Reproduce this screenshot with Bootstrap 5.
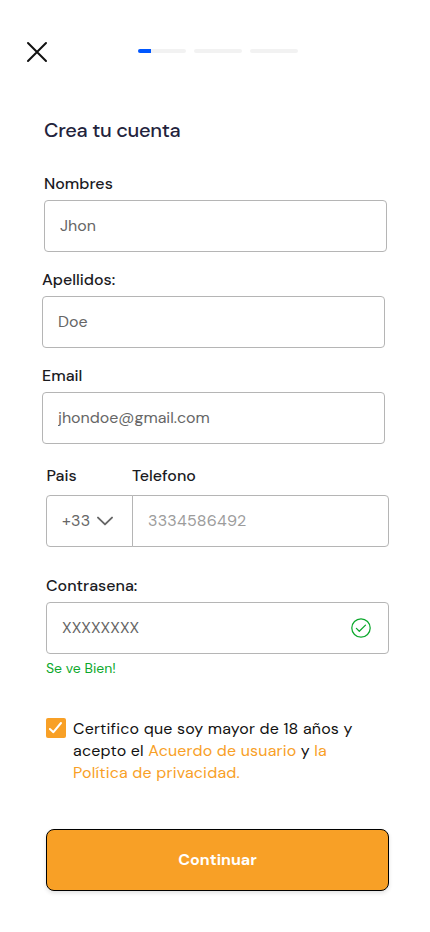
<!DOCTYPE html>
<html lang="es">
<head>
<meta charset="utf-8">
<meta name="viewport" content="width=device-width, initial-scale=1">
<title>Crea tu cuenta</title>
<link href="https://cdn.jsdelivr.net/npm/bootstrap@5.3.0/dist/css/bootstrap.min.css" rel="stylesheet">
<style>
  body { font-family: "DM Sans", Inter, "Liberation Sans", sans-serif; font-size: 16px; color: #1b1b1f; background: #fff; }
  .screen { width: 430px; height: 932px; overflow: hidden; }
  .topbar { padding: 41px 0 0 26px; height: 62px; }
  .close-btn { width: 22px; height: 22px; line-height: 0; }
  .steps { margin: 8px 0 0 90px; gap: 8px; }
  .step { width: 48px; height: 4px; border-radius: 2px; background: #f2f2f2; }
  .step .progress-bar { background: #0057ff; }
  .title { margin: 55px 0 0 44px; font-size: 20px; line-height: 26px; font-weight: 500; color: #23233c; letter-spacing: -.3px; }
  .field { width: 343px; margin-left: 46px; }
  .at-44 { margin: 31px 0 0 44px; }
  .at-42 { margin: 18px 0 0 42px; }
  .phone { margin-top: 22px; }
  .secret { margin-top: 29px; }
  .field .form-label { display: block; line-height: 20px; font-weight: 500; margin-bottom: 6px; }
  .field .form-control, .prefix { height: 52px; border: 1px solid #b5b5b5; border-radius: 4px; padding: 0 15px; font-size: 16px; color: #666; background: #fff; }
  .field .form-control { padding-bottom: 2px; }
  .prefix { width: 87px; letter-spacing: .3px; }
  .phone .form-control { letter-spacing: .2px; }
  .phone .form-control::placeholder { color: #9c9c9c; opacity: 1; }
  .phone-labels { height: 29px; }
  .phone-labels .form-label:first-child { width: 86px; padding-left: .5px; }
  .secret .form-control { padding-right: 50px; }
  .valid-icon { right: 18px; top: 16px; line-height: 0; z-index: 2; }
  .hint { font-size: 14px; line-height: 20px; margin-top: 4px; color: #0ca82c; }
  .consent { margin: 40px 0 0 46px; gap: 7px; line-height: 22px; letter-spacing: .19px; color: #111; }
  .consent a { color: #f8a026; }
  .tick { width: 20px; height: 20px; border-radius: 2px; background: #f8a026; line-height: 0; }
  .submit { width: 343px; height: 62px; margin: 45px 0 0 46px; border: 1px solid #000; border-radius: 8px; font-size: 16px; font-weight: 700; color: #fff; background: #f8a026; box-shadow: 0 2px 4px rgba(0,0,0,.12); }
  .submit:hover { color: #fff; background: #f0951a; }
</style>
</head>
<body>
<main class="screen">
  <header class="topbar d-flex align-items-start">
    <button type="button" class="close-btn btn p-0 border-0" aria-label="Cerrar">
      <svg width="22" height="22" viewBox="0 0 22 22" fill="none" stroke="#111" stroke-width="2" stroke-linecap="round"><path d="M2 2 20 20M20 2 2 20"/></svg>
    </button>
    <div class="steps d-flex">
      <div class="step progress"><div class="progress-bar" style="width:27%"></div></div>
      <div class="step progress"></div>
      <div class="step progress"></div>
    </div>
  </header>

  <h1 class="title">Crea tu cuenta</h1>

  <form>
    <div class="field at-44">
      <label class="form-label" for="nombres">Nombres</label>
      <input id="nombres" class="form-control shadow-none" type="text" value="Jhon">
    </div>
    <div class="field at-42">
      <label class="form-label" for="apellidos">Apellidos:</label>
      <input id="apellidos" class="form-control shadow-none" type="text" value="Doe">
    </div>
    <div class="field at-42">
      <label class="form-label" for="email">Email</label>
      <input id="email" class="form-control shadow-none" type="email" value="jhondoe@gmail.com">
    </div>

    <div class="field phone">
      <div class="phone-labels d-flex">
        <label class="form-label" for="pais">Pais</label>
        <label class="form-label" for="telefono">Telefono</label>
      </div>
      <div class="input-group flex-nowrap">
        <button id="pais" type="button" class="prefix d-flex align-items-center flex-shrink-0">
          <span>+33</span>
          <svg class="ms-1" width="18" height="12" viewBox="0 0 18 12" fill="none" stroke="#666" stroke-width="1.9" stroke-linecap="round" stroke-linejoin="round"><path d="M3 2.6 10 9.4 17 2.6"/></svg>
        </button>
        <input id="telefono" class="form-control shadow-none" type="tel" placeholder="3334586492">
      </div>
    </div>

    <div class="field secret">
      <label class="form-label" for="clave">Contrasena:</label>
      <div class="position-relative">
        <input id="clave" class="form-control shadow-none" type="text" value="XXXXXXXX">
        <span class="valid-icon position-absolute">
          <svg width="20" height="20" viewBox="0 0 20 20" fill="none" stroke="#0ca82c" stroke-width="1.25" stroke-linecap="round" stroke-linejoin="round"><circle cx="10" cy="10" r="9.2"/><path d="M5.4 10.4 8.3 13.3 14.5 7.1"/></svg>
        </span>
      </div>
      <div class="hint">Se ve Bien!</div>
    </div>

    <div class="consent d-flex align-items-start">
      <span class="tick flex-shrink-0" role="checkbox" aria-checked="true" aria-label="Certifico">
        <svg width="20" height="20" viewBox="0 0 20 20" fill="none" stroke="#fff" stroke-width="2" stroke-linecap="round" stroke-linejoin="round"><path d="M3.9 11 7.4 14.2 15 5"/></svg>
      </span>
      <div class="text-nowrap">Certifico que soy mayor de 18 años y<br>acepto el <a class="text-decoration-none" href="#">Acuerdo de usuario</a> y <a class="text-decoration-none" href="#">la<br>Política de privacidad.</a></div>
    </div>

    <button type="button" class="submit btn p-0 d-block">Continuar</button>
  </form>
</main>
<script src="https://cdn.jsdelivr.net/npm/bootstrap@5.3.0/dist/js/bootstrap.bundle.min.js"></script>
</body>
</html>
